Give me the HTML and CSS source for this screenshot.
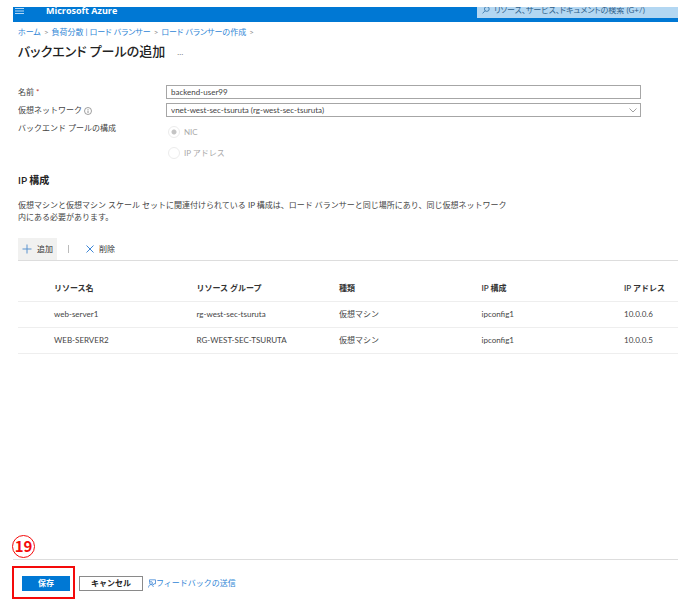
FILE: index.html
```html
<!DOCTYPE html>
<html lang="ja">
<head>
    <meta charset="UTF-8">
    <meta name="viewport" content="width=device-width, initial-scale=1.0">
    <title>バックエンド プールの追加 - Microsoft Azure</title>
    <link rel="stylesheet" href="styles.css">
</head>
<body>
    <header class="topbar">
        <button class="menu" aria-label="メニュー">
            <svg width="9" height="8" viewBox="0 0 9 8"><path d="M0 1.5h9M0 4h9M0 6.5h9" stroke="#b5d8f5" stroke-width="1"/></svg>
        </button>
        <a class="brand" href="#">Microsoft Azure</a>
        <label class="search">
            <svg width="8" height="8" viewBox="0 0 8 8"><circle cx="4.8" cy="3" r="2.4" fill="none" stroke="#2f6ea5" stroke-width=".8"/><path d="M3 4.8L.6 7.4" stroke="#2f6ea5" stroke-width=".8"/></svg>
            <input type="text" placeholder="リソース、サービス、ドキュメントの検索 (G+/)" aria-label="検索">
        </label>
    </header>

    <main>
        <nav class="breadcrumb">
            <a href="#">ホーム</a><span class="sep">&gt;</span>
            <a href="#">負荷分散 | ロード バランサー</a><span class="sep">&gt;</span>
            <a href="#">ロード バランサーの作成</a><span class="sep">&gt;</span>
        </nav>
        <div class="heading">
            <h1>バックエンド プールの追加</h1>
            <button class="more" aria-label="その他">…</button>
        </div>

        <form class="form" id="pool">
            <label for="name">名前 <span class="required">*</span></label>
            <input class="field" type="text" id="name" value="backend-user99">

            <label for="vnet">仮想ネットワーク
                <svg class="info" width="8" height="8" viewBox="0 0 8 8"><circle cx="4" cy="4" r="3.5" fill="none" stroke="#777" stroke-width=".7"/><path d="M4 3.5V6M4 2v.8" stroke="#777" stroke-width=".8"/></svg>
            </label>
            <div class="select">
                <select class="field" id="vnet">
                    <option>vnet-west-sec-tsuruta (rg-west-sec-tsuruta)</option>
                </select>
                <svg class="chevron" width="8" height="5" viewBox="0 0 8 5"><path d="M.5 .5L4 4L7.5 .5" fill="none" stroke="#888" stroke-width=".8"/></svg>
            </div>

            <span id="config">バックエンド プールの構成</span>
            <div class="radios" role="radiogroup" aria-labelledby="config">
                <label><input type="radio" name="config" checked disabled>NIC</label>
                <label><input type="radio" name="config" disabled>IP アドレス</label>
            </div>
        </form>

        <h2>IP 構成</h2>
        <p class="description">仮想マシンと仮想マシン スケール セットに関連付けられている IP 構成は、ロード バランサーと同じ場所にあり、同じ仮想ネットワーク<br>内にある必要があります。</p>

        <div class="toolbar">
            <button class="tool active">
                <svg width="10" height="10" viewBox="0 0 10 10"><path d="M5 .5v9M.5 5h9" stroke="#5b93cf" stroke-width="1"/></svg>
                追加
            </button>
            <span class="divider"></span>
            <button class="tool">
                <svg width="8" height="8" viewBox="0 0 8 8"><path d="M.5 .5l7 7M7.5 .5l-7 7" stroke="#3f87d6" stroke-width="1"/></svg>
                削除
            </button>
        </div>

        <table>
            <thead>
                <tr>
                    <th class="check"></th>
                    <th>リソース名</th>
                    <th>リソース グループ</th>
                    <th>種類</th>
                    <th>IP 構成</th>
                    <th class="address">IP アドレス</th>
                </tr>
            </thead>
            <tbody>
                <tr>
                    <td></td>
                    <td>web-server1</td>
                    <td>rg-west-sec-tsuruta</td>
                    <td>仮想マシン</td>
                    <td>ipconfig1</td>
                    <td>10.0.0.6</td>
                </tr>
                <tr>
                    <td></td>
                    <td>WEB-SERVER2</td>
                    <td>RG-WEST-SEC-TSURUTA</td>
                    <td>仮想マシン</td>
                    <td>ipconfig1</td>
                    <td>10.0.0.5</td>
                </tr>
            </tbody>
        </table>
    </main>

    <footer class="footer">
        <div class="step">
            <span class="step-number">19</span>
            <button class="btn primary" form="pool">保存</button>
        </div>
        <button class="btn">キャンセル</button>
        <a class="feedback" href="#">
            <svg width="8" height="9" viewBox="0 0 8 9"><path d="M1.5 3V.8h6v4H6L5 6V4.8" fill="none" stroke="#3f87d6" stroke-width=".8"/><circle cx="3" cy="4" r="1.4" fill="none" stroke="#3f87d6" stroke-width=".8"/><path d="M.5 8.5C.7 6.6 1.6 5.6 3 5.6S5 6.8 5.4 8" fill="none" stroke="#3f87d6" stroke-width=".8"/></svg>フィードバックの送信
        </a>
    </footer>
</body>
</html>
```
FILE: styles.css
```css
* {
    margin: 0;
    padding: 0;
    box-sizing: border-box;
}
body {
    min-height: 100vh;
    display: flex;
    flex-direction: column;
    padding: 7px 6px 0 13px;
    background: #ffffff;
    color: #444444;
    font-family: Lato, "Noto Sans CJK JP", sans-serif;
    font-size: 8px;
    line-height: 12px;
}
button, input, select {
    font: inherit;
    color: inherit;
    font-feature-settings: inherit;
    border: none;
    background: none;
}
a {
    color: #2f86d6;
    text-decoration: none;
}
svg {
    flex: none;
}
.topbar {
    height: 15px;
    display: flex;
    align-items: flex-end;
    background: #0078d4;
    overflow: hidden;
    font-feature-settings: "palt";
}
.menu {
    display: flex;
    margin: 0 22px 7px 2px;
}
.brand {
    margin-bottom: 7px;
    color: #ffffff;
    font-family: "Open Sans", sans-serif;
    font-size: 9px;
    font-weight: 700;
    line-height: 9px;
}
.search {
    width: 201px;
    height: 17px;
    margin: 0 0 4px auto;
    padding: 0 5px;
    display: flex;
    align-items: center;
    gap: 4px;
    background: #b3d7f2;
}
.search input {
    flex: 1;
    min-width: 0;
    outline: none;
}
.search input::placeholder {
    color: #2f5f8a;
}
main {
    flex: 1;
    padding: 4px 0 0 5px;
}
.breadcrumb {
    display: flex;
    gap: 3px;
    font-feature-settings: "palt";
}
.sep {
    color: #888888;
}
.heading {
    display: flex;
    align-items: center;
    gap: 12px;
    margin-top: 4px;
    font-feature-settings: "palt";
}
h1 {
    color: #222222;
    font-family: Roboto, "Noto Sans CJK JP", sans-serif;
    font-size: 13px;
    font-weight: 500;
    line-height: 20px;
}
.more {
    color: #777777;
}
.form {
    display: grid;
    grid-template-columns: 148px 1fr;
    row-gap: 4px;
    margin: 23px 37px 0 0;
    line-height: 14px;
}
.required {
    color: #c0392b;
}
.info {
    vertical-align: middle;
}
.field {
    display: block;
    width: 100%;
    height: 14px;
    padding: 0 4px;
    border: 1px solid #a6a6a6;
    background: #ffffff;
    line-height: 12px;
}
.select {
    position: relative;
}
.select select {
    appearance: none;
}
.chevron {
    position: absolute;
    right: 4px;
    top: 5px;
    pointer-events: none;
}
.radios {
    display: flex;
    flex-direction: column;
    gap: 7px;
    padding-top: 4px;
    color: #aaaaaa;
}
.radios label {
    display: flex;
    align-items: center;
    gap: 4px;
}
.radios input {
    appearance: none;
    width: 12px;
    height: 12px;
    margin-left: 2px;
    border: 1px solid #ececec;
    border-radius: 50%;
}
.radios input:checked {
    background: radial-gradient(circle, #c4c4c4 2px, transparent 3px);
}
h2 {
    margin-top: 13px;
    color: #222222;
    font-size: 10px;
    font-weight: 600;
    line-height: 14px;
}
.description {
    margin-top: 12px;
}
.toolbar {
    display: flex;
    align-items: center;
    margin-top: 15px;
    border-bottom: 1px solid #dddddd;
}
.tool {
    display: flex;
    align-items: center;
    gap: 5px;
    height: 22px;
    padding: 0 4px;
    color: #333333;
}
.tool.active {
    background: #f1f1f0;
}
.divider {
    width: 1px;
    height: 8px;
    margin: 0 13px 0 11px;
    background: #bbbbbb;
}
table {
    width: 100%;
    margin-top: 14px;
    border-collapse: collapse;
    table-layout: fixed;
}
th, td {
    height: 26px;
    border-bottom: 1px solid #eeeeee;
    text-align: left;
    white-space: nowrap;
}
th {
    color: #333333;
    font-weight: 600;
}
.check {
    width: 36px;
}
.address {
    width: 54px;
}
.footer {
    height: 52px;
    display: flex;
    align-items: center;
    gap: 5px;
    padding: 0 9px 5px 9px;
    border-top: 1px solid #dddddd;
}
.step {
    position: relative;
    margin-right: 4px;
}
.step::before {
    content: "";
    position: absolute;
    inset: -10px -5px -8px -10px;
    border: 2px solid #f40a0a;
}
.step-number {
    position: absolute;
    left: -10px;
    top: -41px;
    width: 23px;
    height: 23px;
    border: 1px solid #f40a0a;
    border-radius: 50%;
    color: #f40a0a;
    font-family: "Noto Sans CJK JP", sans-serif;
    font-size: 15px;
    font-weight: 700;
    line-height: 20px;
    text-align: center;
}
.btn {
    display: block;
    min-width: 64px;
    height: 15px;
    border: 1px solid #8a8a8a;
    color: #222222;
    font-weight: 600;
    line-height: 13px;
}
.btn.primary {
    position: relative;
    min-width: 48px;
    border-color: #0078d4;
    background: #0078d4;
    color: #ffffff;
}
.feedback {
    display: flex;
    align-items: center;
}
```
